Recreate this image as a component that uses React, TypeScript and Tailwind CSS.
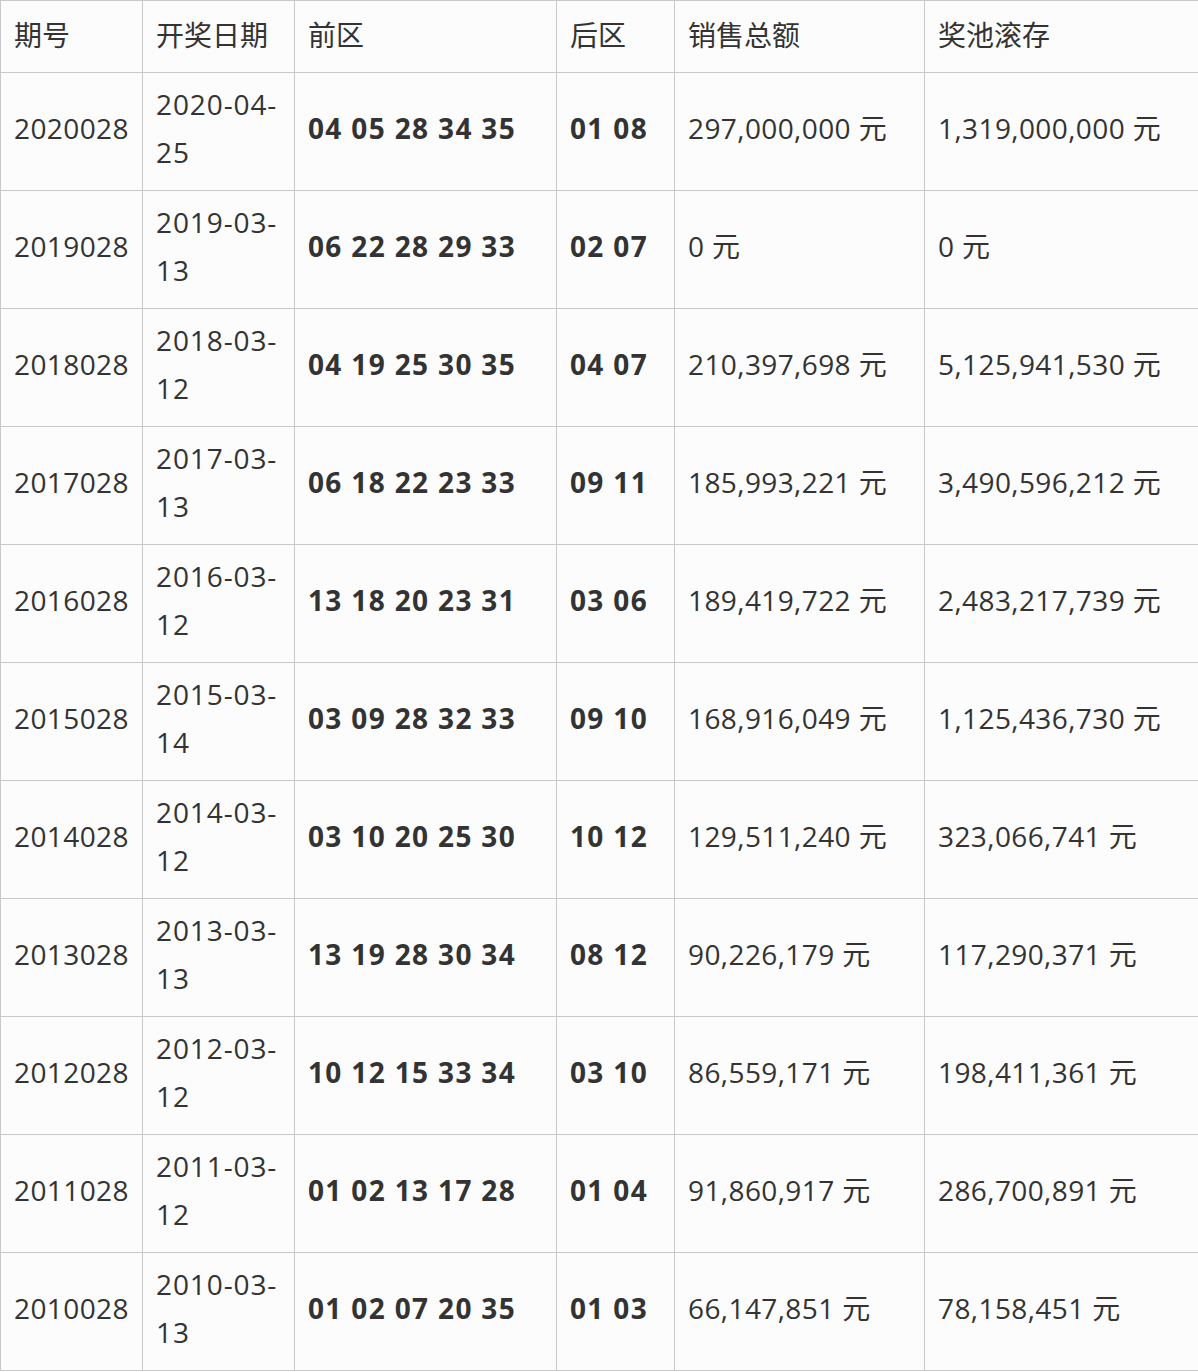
const rows = [
  ["2020028", "2020-04-", "25", "04 05 28 34 35", "01 08", "297,000,000 元", "1,319,000,000 元"],
  ["2019028", "2019-03-", "13", "06 22 28 29 33", "02 07", "0 元", "0 元"],
  ["2018028", "2018-03-", "12", "04 19 25 30 35", "04 07", "210,397,698 元", "5,125,941,530 元"],
  ["2017028", "2017-03-", "13", "06 18 22 23 33", "09 11", "185,993,221 元", "3,490,596,212 元"],
  ["2016028", "2016-03-", "12", "13 18 20 23 31", "03 06", "189,419,722 元", "2,483,217,739 元"],
  ["2015028", "2015-03-", "14", "03 09 28 32 33", "09 10", "168,916,049 元", "1,125,436,730 元"],
  ["2014028", "2014-03-", "12", "03 10 20 25 30", "10 12", "129,511,240 元", "323,066,741 元"],
  ["2013028", "2013-03-", "13", "13 19 28 30 34", "08 12", "90,226,179 元", "117,290,371 元"],
  ["2012028", "2012-03-", "12", "10 12 15 33 34", "03 10", "86,559,171 元", "198,411,361 元"],
  ["2011028", "2011-03-", "12", "01 02 13 17 28", "01 04", "91,860,917 元", "286,700,891 元"],
  ["2010028", "2010-03-", "13", "01 02 07 20 35", "01 03", "66,147,851 元", "78,158,451 元"],
];

const headers = ["期号", "开奖日期", "前区", "后区", "销售总额", "奖池滚存"];

export default function App() {
  const cell = "border border-[#c9c9cc] pl-[13px] pr-2 align-middle";
  const body = `${cell} pb-2 tracking-[0.4px]`;
  const bold = `${cell} pb-2 font-bold whitespace-nowrap tracking-[1.35px]`;
  return (
    <div
      className="w-[1198px] bg-[#fcfcfd] text-[#333] text-[28px] leading-[48px]"
      style={{ fontFamily: '"Open Sans", "Noto Sans CJK SC", sans-serif' }}
    >
      <table className="w-[1198px] table-fixed border-collapse">
        <colgroup>
          <col className="w-[142px]" />
          <col className="w-[152px]" />
          <col className="w-[262px]" />
          <col className="w-[118px]" />
          <col className="w-[250px]" />
          <col className="w-[274px]" />
        </colgroup>
        <thead>
          <tr className="h-[72px]">
            {headers.map((h) => (
              <th key={h} className={`${cell} pb-1 text-left font-normal`}>
                {h}
              </th>
            ))}
          </tr>
        </thead>
        <tbody>
          {rows.map((r) => (
            <tr key={r[0]} className="h-[118px]">
              <td className={body}>{r[0]}</td>
              <td className={`${body} tracking-[0.9px]`}>
                {r[1]}
                <br />
                {r[2]}
              </td>
              <td className={bold}>{r[3]}</td>
              <td className={bold}>{r[4]}</td>
              <td className={`${body} whitespace-nowrap`}>{r[5]}</td>
              <td className={`${body} whitespace-nowrap`}>{r[6]}</td>
            </tr>
          ))}
        </tbody>
      </table>
    </div>
  );
}
